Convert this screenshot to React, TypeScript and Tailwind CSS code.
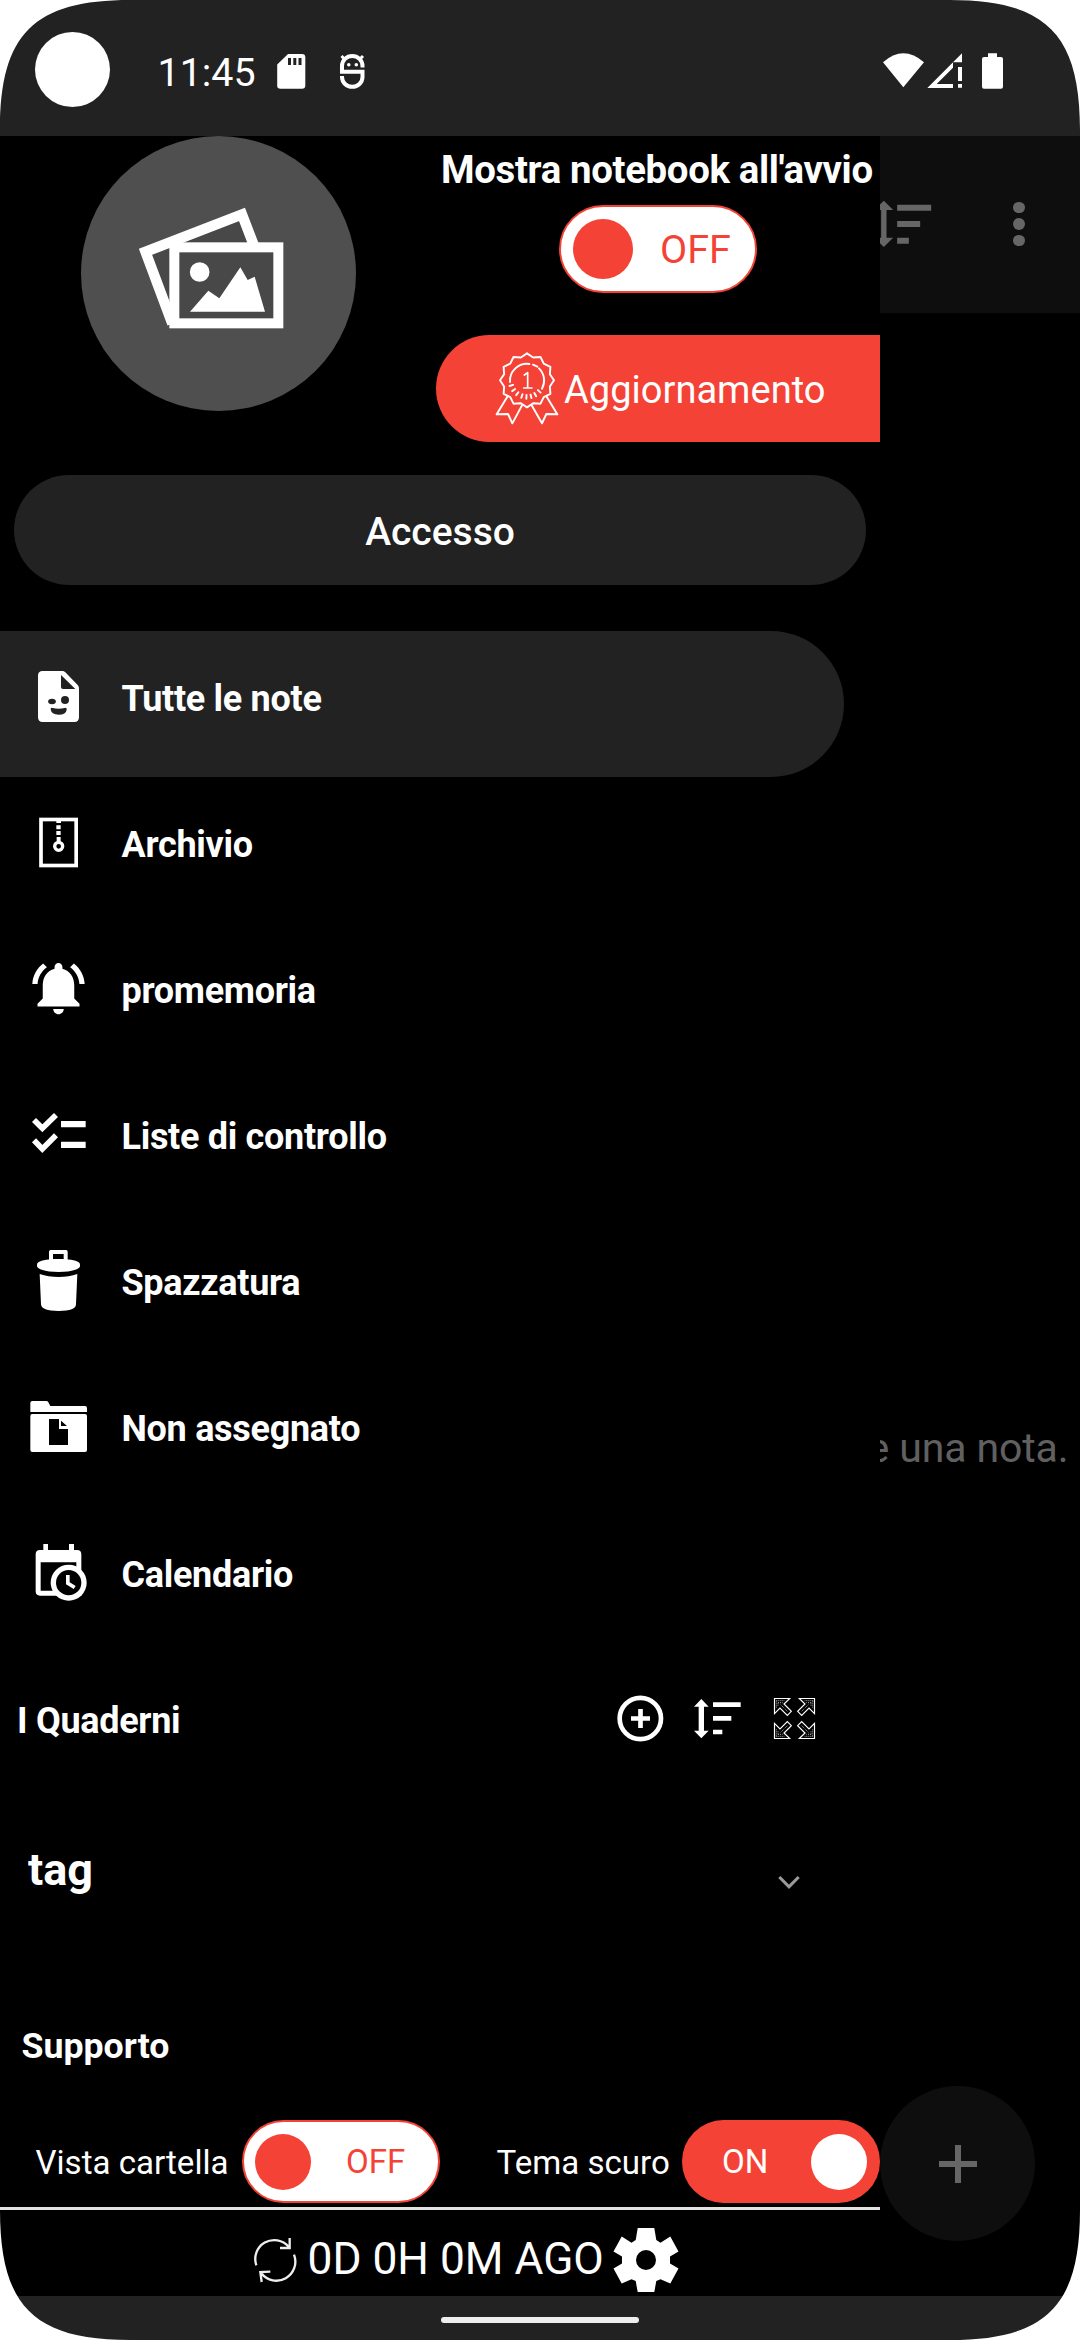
import React from "react";

function SortIcon({ className }: { className: string }) {
  return (
    <svg viewBox="339 102 147 147" className={className} fill="currentColor">
      <path d="M364 117l22 23h-14v72h14l-22 23-22-23h14v-72h-14z" />
      <path d="M399 127h83v14h-83zM399 168h55v14h-55zM399 209h28v14h-28z" />
    </svg>
  );
}

function FileIcon() {
  return (
    <svg viewBox="78 132 198 198" className="size-[66px] shrink-0">
      <path
        fill="#fff"
        fillRule="evenodd"
        d="M128 153H187Q192 153 196 157L233 195Q237 199 237 204V292Q237 306 223 306H128Q114 306 114 292V167Q114 153 128 153ZM183 165V201Q183 207 189 207H226Z"
      />
      <g fill="#222">
        <ellipse cx="156" cy="244.500" rx="11.500" ry="8" />
        <circle cx="195" cy="240" r="12" />
        <path d="M152 268Q151 262 158 264Q176 269 194 264Q201 262 200 269Q198 284 176 284Q154 284 152 268Z" />
      </g>
    </svg>
  );
}

function ArchiveIcon() {
  return (
    <svg viewBox="78 570 198 198" className="size-[66px] shrink-0">
      <g fill="none" stroke="#fff">
        <rect x="123" y="598.500" width="105.500" height="138" strokeWidth="11" />
        <circle cx="176" cy="679" r="12" strokeWidth="10" />
      </g>
      <path fill="#fff" d="M169 600h14v9h-14zM169 616h13v12h-13zM169 633h13v12h-13zM170 651h12v14h-12z" />
    </svg>
  );
}

function BellIcon() {
  return (
    <svg viewBox="-0.38 -0.19 25.14 25.14" className="size-[66px] shrink-0" fill="#fff">
      <path d="M7.58 4.08L6.15 2.65C3.75 4.48 2.17 7.3 2.03 10.5h2c.15-2.65 1.51-4.97 3.55-6.42zM19.97 10.500h2c-.15-3.2-1.73-6.02-4.12-7.85l-1.42 1.43c2.02 1.450 3.390 3.770 3.540 6.420zM18 11c0-3.070-1.640-5.640-4.500-6.320V4c0-.83-.67-1.500-1.500-1.500s-1.500.67-1.500 1.500v.68C7.630 5.360 6 7.920 6 11v5l-2 2v1h16v-1l-2-2v-5zM12 22c1.100 0 2-.9 2-2h-4c0 1.100.9 2 2 2z" />
    </svg>
  );
}

function ChecklistIcon() {
  return (
    <svg viewBox="78 126 198 198" className="size-[66px] shrink-0">
      <path fill="none" stroke="#fff" strokeWidth="17" d="M102 180L127 205L168 165M102 241L127 267L168 226" />
      <path fill="#fff" d="M183 183h74v19h-74zM183 245h74v19h-74z" />
    </svg>
  );
}

function TrashIcon() {
  return (
    <svg viewBox="78 564 198 198" className="size-[66px] shrink-0" fill="#fff">
      <path fillRule="evenodd" d="M152 570H198Q203 570 203 575V602H147V575Q147 570 152 570ZM159 582V598H191V582Z" />
      <path d="M176 597C205 597 226 600 236 607Q240 609 240 614V619C238 629 212 636 176 636S113 629 111 619V614Q111 609 115 607C126 600 147 597 176 597Z" />
      <path d="M119 642Q145 651 176 651T232 642L228 733Q228 753 176 753T123 733Z" />
    </svg>
  );
}

function FolderIcon() {
  return (
    <svg viewBox="78 1002 198 198" className="size-[66px] shrink-0">
      <g fill="#fff">
        <path d="M91 1056V1029Q91 1023 97 1023H139Q143 1023 145 1027L151 1038H255Q261 1038 261 1044V1056Z" />
        <rect x="91" y="1062" width="170" height="114" rx="6" />
      </g>
      <path fill="#000" d="M147 1077H177V1107H204V1155H147ZM183 1082V1098H201Z" />
    </svg>
  );
}

function CalendarIcon() {
  return (
    <svg viewBox="78 480 198 198" className="size-[66px] shrink-0">
      <path
        fill="#fff"
        fillRule="evenodd"
        d="M130 492H144V510H207V492H222V510H231Q244 510 244 523V647H120Q107 647 107 634V523Q107 510 120 510H130ZM122 547V632H229V547Z"
      />
      <circle cx="206" cy="608" r="54" fill="#fff" />
      <circle cx="206" cy="608" r="38" fill="#000" />
      <path fill="#fff" d="M198 585h11v22l18 11-6 9-23-14z" />
    </svg>
  );
}

const medalEdge =
  Array.from({ length: 24 }, (_, i) => {
    const r = i % 2 === 0 ? 81 : 71;
    const a = (i * Math.PI) / 12 - Math.PI / 2;
    return `${i === 0 ? "M" : "L"}${(321 + r * Math.cos(a)).toFixed(1)} ${(751 + r * Math.sin(a)).toFixed(1)}`;
  }).join("") + "Z";

const medalRays = [42, 60, 76, 92, 108, 126, 144, 162]
  .map((deg) => {
    const a = (deg * Math.PI) / 180;
    const c = Math.cos(a);
    const s = Math.sin(a);
    return `M${(321 + 44 * c).toFixed(1)} ${(751 + 44 * s).toFixed(1)}L${(321 + 55 * c).toFixed(1)} ${(751 + 55 * s).toFixed(1)}`;
  })
  .join("");

function MedalIcon() {
  return (
    <svg
      viewBox="222 663 198 225"
      className="h-[75px] w-[66px] shrink-0"
      fill="none"
      stroke="#fff"
      strokeWidth="5.800"
      strokeLinejoin="round"
      strokeLinecap="round"
    >
      <path d={medalEdge} />
      <path d="M270 756A51 51 0 0 1 328 702M339 704L352 710M357 715A51 51 0 0 1 366 776" />
      <path d={medalRays} />
      <path strokeWidth="5" d="M313 735L323 728V774M311 774H336" />
      <path d="M262 800L230 853L264 852L277 880L306 826M380 800L412 853L379 852L366 880L335 826" />
    </svg>
  );
}

const expandArrow = "M583.500 115.500H629L612 132L634 154L622 166L600 144L583.500 161Z";
const expandDots = "M589 122H614M589 122V144M594 128H608M594 128V140M602 134L624 156";

function ExpandIcon() {
  const arrow = (
    <>
      <path d={expandArrow} strokeWidth="3.500" />
      <path d={expandDots} strokeWidth="3" strokeDasharray="3 3" stroke="#aaa" />
    </>
  );
  return (
    <svg viewBox="570 102 147 147" className="size-[49px]" fill="none" stroke="#fff">
      <g>{arrow}</g>
      <g transform="translate(1287 0) scale(-1 1)">{arrow}</g>
      <g transform="translate(0 351) scale(1 -1)">{arrow}</g>
      <g transform="translate(1287 351) scale(-1 -1)">{arrow}</g>
    </svg>
  );
}

function StatusBar() {
  return (
    <div className="flex h-[136px] shrink-0 items-start bg-[#222] pl-[35px] text-white">
      <div className="mt-8 size-[75px] rounded-full bg-white" />
      <div className="ml-[47.5px] mt-[49px] w-[99.5px] text-[39.4px] leading-[47px]">11:45</div>
      <svg viewBox="275 52 32 39" className="ml-[18px] mt-[52px] h-[39px] w-8">
        <path fill="#fff" d="M288 54H302Q305.300 54 305.300 57.300V85.500Q305.300 88.800 302 88.800H280.500Q277.200 88.800 277.200 85.500V64.500Z" />
        <path fill="#222" d="M288 58h3v7h-3zM293.300 58h3v7h-3zM298.500 58h3v7h-3z" />
      </svg>
      <svg viewBox="337 52 31 39" className="ml-[30px] mt-[52px] h-[39px] w-[31px]" fill="none" stroke="#fff" strokeWidth="4">
        <path d="M362.500 67.500V66A10.250 10 0 0 0 342 66V71.800H362.500V77A10.250 9.800 0 0 1 342 77V76" />
        <path strokeWidth="3" d="M341.500 56L345 59.500M363 56L359.500 59.500" />
        <path strokeWidth="3.600" strokeLinecap="round" d="M348.800 64.700V64.710M356.300 64.700V64.710" />
      </svg>
      <svg viewBox="240 150 390 126" className="ml-[512px] mt-[50px] h-[42px] w-[130px]" fill="#fff">
        <path d="M249 187Q310 133 372 187L310 262Z" />
        <path fillRule="evenodd" d="M382 264L486 160V187H459V264ZM410 252H459V203Z" />
        <path d="M474 201h12v42h-12zM474 252h12v11h-12z" />
        <path d="M564 160h27v11h12q6 0 6 6v83q0 6-6 6h-51q-6 0-6-6v-83q0-6 6-6h12z" />
      </svg>
    </div>
  );
}

function Toggle({ on, small }: { on?: boolean; small?: boolean }) {
  if (on) {
    return (
      <div className="flex h-[83px] w-[198px] shrink-0 items-center rounded-full bg-[#f44336] pl-[40px] pr-[13px] text-white">
        <span className="w-[89px] pt-px text-[33.1px] leading-none">ON</span>
        <span className="size-14 rounded-full bg-white" />
      </div>
    );
  }
  if (small) {
    return (
      <div className="flex h-[83px] w-[198px] shrink-0 items-center rounded-full border-2 border-[#f44336] bg-white pl-[11px] text-[#f44336]">
        <span className="size-14 rounded-full bg-[#f44336]" />
        <span className="ml-[35px] pt-px text-[33.1px] leading-none">OFF</span>
      </div>
    );
  }
  return (
    <div className="flex h-[88px] w-[198px] shrink-0 items-center rounded-full border-2 border-[#f44336] bg-white pl-3 text-[#f44336]">
      <span className="size-[60px] rounded-full bg-[#f44336]" />
      <span className="ml-[27px] pt-px text-[39.5px] leading-none">OFF</span>
    </div>
  );
}

function Avatar() {
  return (
    <svg viewBox="62 48 825 825" className="ml-[80.500px] size-[275px] shrink-0">
      <circle cx="474.500" cy="460.500" r="412.500" fill="#4f4f4f" />
      <path d="M275 404L537 303L565 370H600V600H327Z" fill="#484848" />
      <path d="M336 611L255.500 395.500L545 283.500L582 380" fill="none" stroke="#fff" strokeWidth="31" />
      <rect x="342" y="382" width="312" height="228" fill="#484848" stroke="#fff" strokeWidth="30" />
      <circle cx="418" cy="456" r="29.500" fill="#fff" />
      <path d="M389 575L444 512L477 535L540 442L562 480L583 470L614 575Z" fill="#fff" />
    </svg>
  );
}

const items = [
  { label: "Tutte le note", Icon: FileIcon },
  { label: "Archivio", Icon: ArchiveIcon },
  { label: "promemoria", Icon: BellIcon },
  { label: "Liste di controllo", Icon: ChecklistIcon },
  { label: "Spazzatura", Icon: TrashIcon },
  { label: "Non assegnato", Icon: FolderIcon },
  { label: "Calendario", Icon: CalendarIcon },
];

function Drawer() {
  return (
    <div className="flex w-[880px] shrink-0 flex-col bg-black text-white">
      <div className="flex h-[339px]">
        <Avatar />
        <div className="ml-auto flex w-[444px] flex-col">
          <div className="h-[68px] whitespace-nowrap pl-[5px] text-[38.4px] font-bold leading-[68px] tracking-[-0.35px]">
            Mostra notebook all'avvio
          </div>
          <div className="ml-[123px] mt-px">
            <Toggle />
          </div>
          <div className="mt-[42px] flex h-[107px] items-center gap-1 rounded-l-full bg-[#f44336] pl-[58px]">
            <MedalIcon />
            <span className="pt-[3px] text-[38.05px] leading-none">Aggiornamento</span>
          </div>
        </div>
      </div>

      <div className="ml-3.5 flex h-[110px] w-[852px] items-center justify-center rounded-full bg-[#222] pt-1 text-[39px] font-medium leading-none">
        Accesso
      </div>

      <div className="mt-[46px]">
        {items.map(({ label, Icon }, i) => (
          <div
            key={label}
            className={
              i === 0
                ? "flex h-[146px] w-[844px] items-center rounded-r-full bg-[#222] pb-3.5 pl-[26px]"
                : "flex h-[146px] w-[844px] items-center pb-3.5 pl-[26px]"
            }
          >
            <Icon />
            <span className="ml-[29.5px] pt-1 text-[36px] font-bold leading-none tracking-[-0.3px]">{label}</span>
          </div>
        ))}
      </div>

      <div className="flex h-[131px] shrink-0 items-center gap-7 pl-[17px] pr-[61px]">
        <span className="mr-auto pt-1 text-[36px] font-bold leading-none tracking-[-0.3px]">I Quaderni</span>
        <svg viewBox="108 102 147 147" className="size-[49px]" fill="none" stroke="#fff" strokeWidth="14">
          <circle cx="181" cy="175.500" r="62" />
          <path d="M153 175.500H210M181.500 147V204" />
        </svg>
        <SortIcon className="size-[49px]" />
        <ExpandIcon />
      </div>

      <div className="flex h-[171px] shrink-0 items-center justify-between pl-7 pr-[79px]">
        <span className="text-[45px] font-bold leading-none">tag</span>
        <svg viewBox="591 633 72 72" className="mt-[27px] size-6" fill="none" stroke="#999" strokeWidth="9.500">
          <path d="M598 651L627 680.500L656 651" />
        </svg>
      </div>

      <div className="flex h-[165px] shrink-0 items-center pl-[21.500px] pt-[19px] text-[35.7px] font-bold leading-none">
        Supporto
      </div>

      <div className="flex h-[83px] shrink-0 items-center pl-[35.500px] text-[33.1px] leading-none">
        <span className="w-[206.500px] pt-0.5">Vista cartella</span>
        <Toggle small />
        <span className="ml-[56.500px] w-[185.500px] pt-0.5">Tema scuro</span>
        <Toggle on />
      </div>

      <div className="mt-1 h-[3px] shrink-0 bg-[#e6e1e1]" />

      <div className="flex h-[86px] shrink-0 items-center pl-[253px] pt-3.5">
        <svg viewBox="759 468 132 144" className="h-12 w-11" fill="none" stroke="#eee" strokeWidth="7">
          <path d="M769 556A57 57 0 0 1 866 500M869 474V504H840" />
          <path d="M882 524A57 57 0 0 1 784 580M785 606L781 576L811 575" />
        </svg>
        <span className="-mt-0.5 ml-[10.500px] w-[305px] whitespace-nowrap text-[44.3px] leading-none">0D 0H 0M AGO</span>
        <svg viewBox="-33 -32 66 64" className="h-16 w-[66px]" fill="#fff">
          <path
            fillRule="evenodd"
            d="M-8.300 -32H8.300L10.300 -20L14.500 -17.300L24.300 -23.500L32.500 -8.500L24 -3.500V3.500L32.500 8.500L24.300 23.500L14.500 19.300L10.300 21L8.300 32H-8.300L-10.300 21L-14.500 19.300L-24.300 23.500L-32.500 8.500L-24 3.500V-3.500L-32.500 -8.500L-24.300 -23.500L-14.500 -17.300L-10.300 -20ZM0 -10A10 10 0 1 0 0 10A10 10 0 1 0 0 -10Z"
          />
        </svg>
      </div>
    </div>
  );
}

function NotesBackdrop() {
  return (
    <div className="flex w-[200px] flex-col overflow-hidden bg-black text-[#666]">
      <div className="flex h-[177px] items-start bg-[#0e0e0e]">
        <svg viewBox="240 594 200 156" className="mt-[62px] h-[52px] w-[67px]" fill="currentColor">
          <path d="M251 602L279 630H259V713H279L251 741L223 713H243V630H223Z" />
          <path d="M291 614h102v18H291zM291 663h69v18h-69zM291 713h35v18h-35z" />
        </svg>
        <div className="ml-[66px] mt-[65.500px] flex flex-col gap-[5px]">
          <span className="size-[11.500px] rounded-full bg-[#666]" />
          <span className="size-[11.500px] rounded-full bg-[#666]" />
          <span className="size-[11.500px] rounded-full bg-[#666]" />
        </div>
      </div>
      <div className="mt-[1110px] flex h-[50px] justify-end whitespace-nowrap pr-[11.5px] text-[41px] leading-[50px] tracking-[-0.1px] text-[#606060]">
        e una nota.
      </div>
      <div className="mt-[613px] flex size-[155px] items-center justify-center rounded-full bg-[#0e0e0e]">
        <svg viewBox="0 0 38 38" className="size-[38px]" stroke="#666" strokeWidth="6">
          <path d="M0 19H38M19 0V38" />
        </svg>
      </div>
    </div>
  );
}

function Corner({ className }: { className: string }) {
  return (
    <svg viewBox="0 0 130 130" className={className} fill="#fff">
      <path d="M0 0H130C34 0 0 34 0 130Z" />
    </svg>
  );
}

export default function App() {
  return (
    <div className="relative flex h-[2340px] w-[1080px] flex-col overflow-hidden bg-black font-['Roboto',sans-serif]">
      <StatusBar />
      <div className="flex h-[2160px] shrink-0">
        <Drawer />
        <NotesBackdrop />
      </div>
      <div className="flex h-11 shrink-0 justify-center bg-[#222] pt-[21px]">
        <div className="h-1.5 w-[198px] rounded-full bg-[#eee]" />
      </div>
      <Corner className="absolute left-0 top-0 size-[130px]" />
      <Corner className="absolute right-0 top-0 size-[130px] rotate-90" />
      <Corner className="absolute bottom-0 right-0 size-[130px] rotate-180" />
      <Corner className="absolute bottom-0 left-0 size-[130px] -rotate-90" />
    </div>
  );
}
